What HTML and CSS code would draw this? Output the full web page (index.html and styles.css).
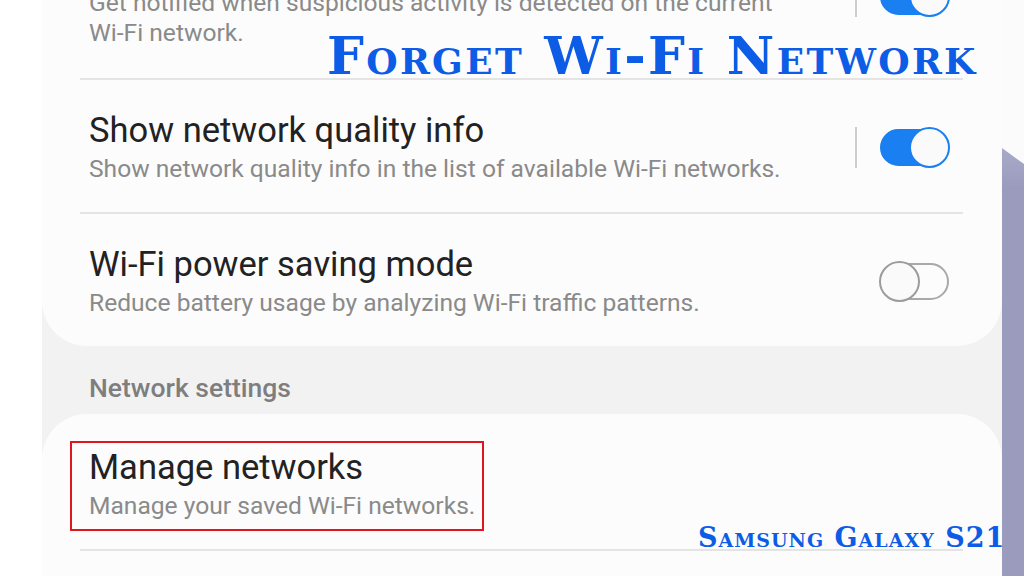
FILE: index.html
```html
<!DOCTYPE html>
<html lang="en">
<head>
    <meta charset="UTF-8">
    <meta name="viewport" content="width=device-width, initial-scale=1.0">
    <title>Forget Wi-Fi Network</title>
    <link rel="stylesheet" href="styles.css">
</head>
<body>
    <div class="screen">
        <div class="gutter"></div>

        <div class="phone">
            <div class="card card-top">
                <div class="row row-first">
                    <div class="row-text">
                        <div class="row-title">Detect suspicious networks</div>
                        <div class="row-sub">Get notified when suspicious activity is detected on the current Wi-Fi network.</div>
                    </div>
                    <div class="divider"></div>
                    <div class="toggle on"></div>
                </div>
                <div class="row">
                    <div class="row-text">
                        <div class="row-title">Show network quality info</div>
                        <div class="row-sub">Show network quality info in the list of available Wi-Fi networks.</div>
                    </div>
                    <div class="divider"></div>
                    <div class="toggle on"></div>
                </div>
                <div class="row last">
                    <div class="row-text">
                        <div class="row-title">Wi-Fi power saving mode</div>
                        <div class="row-sub">Reduce battery usage by analyzing Wi-Fi traffic patterns.</div>
                    </div>
                    <div class="toggle"></div>
                </div>
            </div>

            <div class="section-label">Network settings</div>

            <div class="card card-bottom">
                <div class="row row-manage">
                    <div class="row-text">
                        <div class="row-title">Manage networks</div>
                        <div class="row-sub">Manage your saved Wi-Fi networks.</div>
                    </div>
                    <div class="highlight"></div>
                </div>
            </div>
        </div>

        <div class="edge">
            <div class="edge-fill"></div>
        </div>

        <h1 class="headline">Forget Wi-Fi Network</h1>
        <div class="caption">Samsung Galaxy S21</div>
    </div>
</body>
</html>
```

FILE: styles.css
```css
:root {
    --phone-bg: #f2f2f2;
    --card-bg: #fcfcfc;
    --line: #e4e4e4;
    --title: #222222;
    --sub: #8a8a8a;
    --blue: #1a7ff0;
    --brand: #0d5ce6;
}

body {
    margin: 0;
    background: #ffffff;
    font-family: 'Roboto', 'Liberation Sans', sans-serif;
    overflow: hidden;
}

.screen {
    position: relative;
    display: flex;
    width: 1024px;
    height: 576px;
    overflow: hidden;
}

.gutter {
    width: 42px;
    flex-shrink: 0;
    background: #ffffff;
}

.phone {
    width: 960px;
    flex-shrink: 0;
    background: var(--phone-bg);
    margin-top: -86px;
    display: flex;
    flex-direction: column;
}

.card {
    background: var(--card-bg);
}

.card-top {
    border-radius: 0 0 45px 45px;
}

.card-bottom {
    flex: 1;
    border-radius: 45px 45px 0 0;
}

.row {
    position: relative;
    display: flex;
    align-items: center;
    margin: 0 39px 0 38px;
    padding: 30px 13px 28px 9px;
    border-bottom: 2px solid var(--line);
}

.row.last {
    border-bottom: none;
}

.row-first {
    padding-bottom: 30px;
}

.row-manage {
    padding-top: 33px;
    padding-bottom: 28px;
}

.row-text {
    flex: 1;
    min-width: 0;
}

.row-title {
    font-size: 34.5px;
    line-height: 40px;
    color: var(--title);
    white-space: nowrap;
}

.row-sub {
    margin-top: 4px;
    font-size: 24.6px;
    line-height: 30px;
    color: var(--sub);
    max-width: 705px;
}

.divider {
    width: 2px;
    height: 41px;
    background: #cfcfcf;
    margin-right: 22px;
}

/* toggle switch: track + thumb */
.toggle {
    position: relative;
    width: 71px;
    height: 41px;
    flex-shrink: 0;
}

.toggle::before {
    content: "";
    position: absolute;
    top: 2px;
    left: 1px;
    right: 1px;
    height: 37px;
    box-sizing: border-box;
    border-radius: 19px;
    border: 2px solid #a9a9a9;
}

.toggle::after {
    content: "";
    position: absolute;
    top: 0;
    left: 0;
    width: 41px;
    height: 41px;
    box-sizing: border-box;
    border-radius: 50%;
    background: #fafafa;
    border: 2px solid #9c9c9c;
}

.toggle.on::before {
    background: var(--blue);
    border-color: var(--blue);
}

.toggle.on::after {
    left: auto;
    right: 0;
    border-color: var(--blue);
}

.section-label {
    height: 68px;
    box-sizing: border-box;
    padding: 27px 0 0 47px;
    font-size: 26.5px;
    line-height: 30px;
    font-weight: 500;
    color: #7e7e7e;
}

.highlight {
    position: absolute;
    left: -10px;
    top: 27px;
    width: 414px;
    height: 90px;
    box-sizing: border-box;
    border: 2px solid #e0161f;
}

.edge {
    flex: 1;
    background: #fbfbfb;
    display: flex;
    flex-direction: column;
    justify-content: flex-end;
}

.edge-fill {
    height: 428px;
    background: linear-gradient(#a9a9c9, #9b9bbe 40px);
    clip-path: polygon(0 0, 100% 16px, 100% 100%, 0 100%);
}

.headline {
    position: absolute;
    left: 327px;
    top: 26px;
    margin: 0;
    font-family: 'DejaVu Serif', 'Liberation Serif', serif;
    font-variant: small-caps;
    font-weight: bold;
    font-size: 52px;
    line-height: 60px;
    letter-spacing: 2.3px;
    color: var(--brand);
    white-space: nowrap;
}

.caption {
    position: absolute;
    left: 698px;
    top: 522px;
    font-family: 'DejaVu Serif', 'Liberation Serif', serif;
    font-variant: small-caps;
    font-weight: bold;
    font-size: 27px;
    line-height: 32px;
    letter-spacing: 1px;
    color: var(--brand);
    white-space: nowrap;
}
```
